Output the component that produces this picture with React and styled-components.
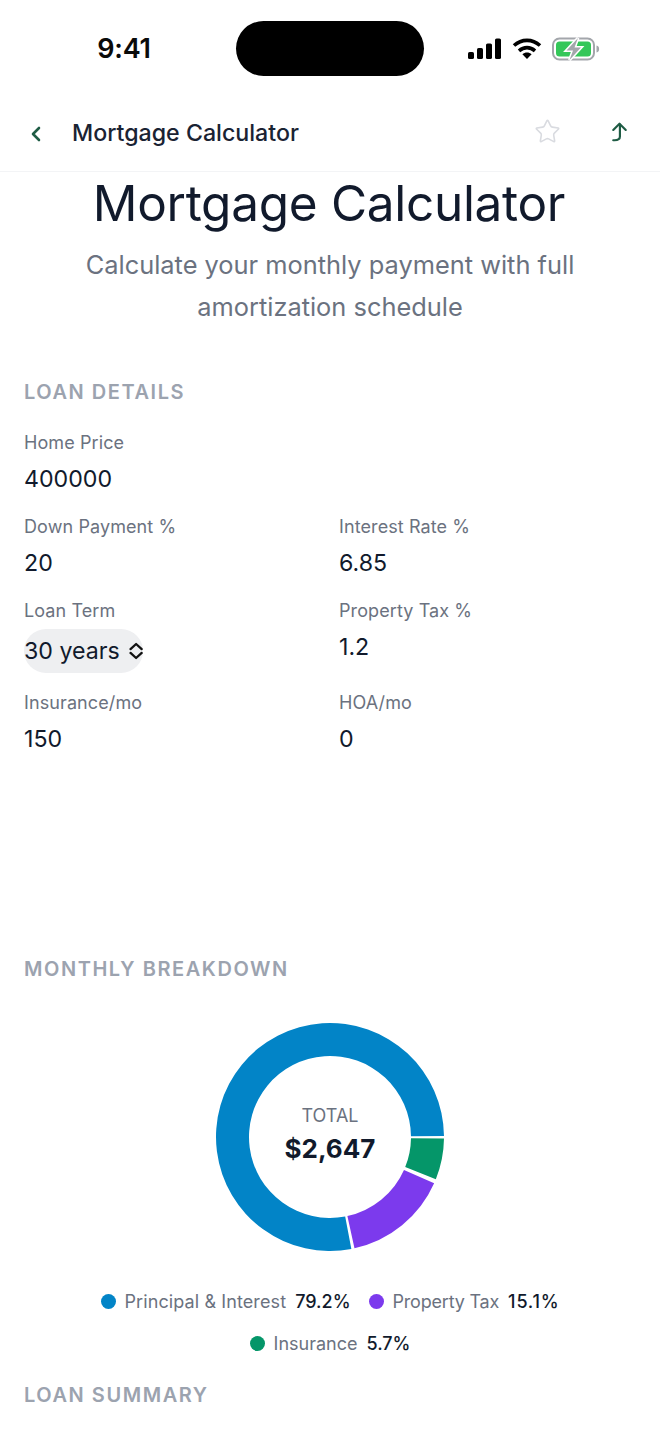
import React from "react";
import styled, { createGlobalStyle } from "styled-components";
import { ChevronLeft, Star } from "lucide-react";

const Global = createGlobalStyle`
  html, body { margin: 0; padding: 0; background: #fff; }
  body { font-family: Inter, "Liberation Sans", sans-serif; color: #111827; }
  * { box-sizing: border-box; }
`;
const Page = styled.div`width: 660px; height: 1434px; overflow: hidden; background: #fff;`;
const StatusBar = styled.div`
  height: 96px; display: grid; grid-template-columns: 236px 188px 236px; align-items: start; padding-top: 21px;
`;
const Clock = styled.div`
  font-size: 27px; font-weight: 600; letter-spacing: -0.2px; color: #0a0a0a; text-align: center; line-height: 55px; padding-left: 12px;
`;
const Island = styled.div`height: 55px; background: #000; border-radius: 28px;`;
const StatusIcons = styled.div`display: flex; align-items: center; height: 55px; padding-left: 44px;`;
const StatusIcon = styled.div`display: flex; align-items: center; margin-left: ${p => p.$gap}px;`;
const NavBar = styled.div`
  height: 76px; display: flex; align-items: center; padding: 0 32px 2px 24px; border-bottom: 1px solid #f3f4f6;
`;
const BackButton = styled.div`width: 48px; display: flex; align-items: center; color: #1f5c45; margin-top: 2px;`;
const NavTitle = styled.div`flex: 1; font-size: 23.2px; font-weight: 500; color: #1a2333; line-height: 30px;`;
const NavAction = styled.div`display: flex; align-items: center; justify-content: center; margin-left: ${p => p.$gap}px; margin-top: -2px;`;
const Main = styled.div`padding: 0 24px;`;
const Hero = styled.div`text-align: center; margin-top: -1px;`;
const Title = styled.h1`margin: 0; padding-right: 2px; font-size: 49.5px; font-weight: 400; line-height: 64px; color: #111a2c; letter-spacing: -0.3px;`;
const Subtitle = styled.p`margin: 0; padding: 9px 30px 0; font-size: 25.4px; line-height: 42px; color: #6b7280;`;
const SectionLabel = styled.div`
  font-size: 20px; font-weight: 600; letter-spacing: 1.55px; color: #9ca3af; text-transform: uppercase; line-height: 24px;
`;
const DetailsLabel = styled(SectionLabel)`margin-top: 52px;`;
const Fields = styled.div`display: grid; grid-template-columns: 315px 1fr; margin-top: 27px;`;
const Field = styled.div`height: ${p => p.$h || 84}px; grid-column: ${p => p.$wide ? "1 / -1" : "auto"};`;
const FieldLabel = styled.div`font-size: 18px; letter-spacing: 0.1px; line-height: 24px; color: #6b7280; height: 24px;`;
const FieldValue = styled.div`font-size: 23.2px; line-height: 30px; margin-top: 9px; color: #111a2c;`;
const Select = styled.div`
  display: inline-flex; align-items: center; gap: 9px; height: 44px; width: 119px; margin-top: 6px;
  background: #eeeff1; border-radius: 22px; font-size: 23.2px; color: #111a2c; white-space: nowrap;
`;
const BreakdownLabel = styled(SectionLabel)`margin-top: 182px;`;
const DonutWrap = styled.div`
  position: relative; width: 230px; height: 230px; margin: 41px auto 0;
`;
const DonutCenter = styled.div`
  position: absolute; inset: 0; display: flex; flex-direction: column; align-items: center; justify-content: center; padding-bottom: 3px;
`;
const TotalLabel = styled.div`font-size: 18px; line-height: 24px; color: #6b7280;`;
const TotalValue = styled.div`font-size: 26px; font-weight: 700; line-height: 36px; color: #111a2c; margin-top: 3px;`;
const Legend = styled.div`display: flex; flex-wrap: wrap; justify-content: center; column-gap: 18px; row-gap: 18px; margin-top: 37px;`;
const LegendItem = styled.div`display: flex; align-items: center; height: 24px; font-size: 18px;`;
const Dot = styled.span`width: 15px; height: 15px; border-radius: 50%; background: ${p => p.$c}; margin-right: 9px;`;
const LegendName = styled.span`color: #6b7280; margin-right: 9px; letter-spacing: ${p => p.$ls}px;`;
const LegendPct = styled.span`color: #111a2c; font-weight: 500; letter-spacing: ${p => p.$ls || 0}px;`;
const SummaryLabel = styled(SectionLabel)`margin-top: 28px;`;

const pol = (r, a) => {
  const t = (a * Math.PI) / 180;
  return [115 + r * Math.cos(t), 115 + r * Math.sin(t)];
};
const arc = (a0, a1, R = 114, r = 81) => {
  const [x1, y1] = pol(R, a0), [x2, y2] = pol(R, a1), [x3, y3] = pol(r, a1), [x4, y4] = pol(r, a0);
  const l = a1 - a0 > 180 ? 1 : 0;
  return `M${x1} ${y1}A${R} ${R} 0 ${l} 1 ${x2} ${y2}L${x3} ${y3}A${r} ${r} 0 ${l} 0 ${x4} ${y4}Z`;
};

const Signal = () => (
  <svg width="34" height="22" viewBox="0 0 34 22" fill="#000">
    <rect x="0" y="14" width="6" height="7" rx="1.6" /><rect x="9" y="10" width="6" height="11" rx="1.6" />
    <rect x="18" y="5.5" width="6" height="15.5" rx="1.6" /><rect x="27" y="0.5" width="6" height="20.5" rx="1.6" />
  </svg>
);
const Wifi = () => (
  <svg width="30" height="22" viewBox="0 0 30 22" fill="none" stroke="#000" strokeWidth="3.6">
    <path d="M2 7.5C9.5 .6 20.5 .6 28 7.5" /><path d="M7 12.8C11.8 8.6 18.2 8.6 23 12.8" />
    <path d="M15 21l-4.6-4.8c2.6-2.2 6.6-2.2 9.2 0z" fill="#000" stroke="none" />
  </svg>
);
const Battery = () => (
  <svg width="48" height="24" viewBox="0 0 48 24">
    <rect x="1" y="1.5" width="41" height="21" rx="6.5" fill="none" stroke="#a3a6ab" strokeWidth="2" />
    <rect x="4" y="4.5" width="35" height="15" rx="3.5" fill="#34c759" />
    <path d="M44.5 8.5c2 .4 2.6 1.8 2.6 3.5s-.6 3.1-2.6 3.5z" fill="#a3a6ab" />
    <path d="M26 1L14.5 13.5h6.5L17.5 23l11.5-12.5h-6.5z" fill="#a3a6ab" stroke="#fff" strokeWidth="3" paintOrder="stroke" />
  </svg>
);
const ShareUp = () => (
  <svg width="17" height="20" viewBox="0 0 20 24" fill="none" stroke="#1f5c45" strokeWidth="2.6" strokeLinecap="round" strokeLinejoin="round">
    <path d="M2.5 9.5L10 2l7.5 7.5" /><path d="M10.5 3v14.5c0 3-1.6 4.4-6.5 4.4H2.5" />
  </svg>
);
const UpDown = () => (
  <svg width="15" height="18" viewBox="0 0 15 18" fill="none" stroke="#111" strokeWidth="2.4" strokeLinecap="round" strokeLinejoin="round">
    <path d="M1.6 7L7.5 1.6 13.4 7" /><path d="M1.6 11L7.5 16.4 13.4 11" />
  </svg>
);

export default function App() {
  return (
    <Page>
      <Global />
      <StatusBar>
        <Clock>9:41</Clock>
        <Island />
        <StatusIcons>
          <Signal />
          <StatusIcon $gap={10}><Wifi /></StatusIcon>
          <StatusIcon $gap={10}><Battery /></StatusIcon>
        </StatusIcons>
      </StatusBar>
      <NavBar>
        <BackButton><ChevronLeft size={24} strokeWidth={2.6} /></BackButton>
        <NavTitle>Mortgage Calculator</NavTitle>
        <NavAction $gap={0}><Star size={27} strokeWidth={1.4} color="#d9dbe0" /></NavAction>
        <NavAction $gap={50}><ShareUp /></NavAction>
      </NavBar>
      <Main>
        <Hero>
          <Title>Mortgage Calculator</Title>
          <Subtitle>Calculate your monthly payment with full amortization schedule</Subtitle>
        </Hero>
        <DetailsLabel>Loan Details</DetailsLabel>
        <Fields>
          <Field $wide><FieldLabel>Home Price</FieldLabel><FieldValue>400000</FieldValue></Field>
          <Field><FieldLabel>Down Payment %</FieldLabel><FieldValue>20</FieldValue></Field>
          <Field><FieldLabel>Interest Rate %</FieldLabel><FieldValue>6.85</FieldValue></Field>
          <Field $h={92}>
            <FieldLabel>Loan Term</FieldLabel>
            <Select>30 years<UpDown /></Select>
          </Field>
          <Field $h={92}><FieldLabel>Property Tax %</FieldLabel><FieldValue>1.2</FieldValue></Field>
          <Field><FieldLabel>Insurance/mo</FieldLabel><FieldValue>150</FieldValue></Field>
          <Field><FieldLabel>HOA/mo</FieldLabel><FieldValue>0</FieldValue></Field>
        </Fields>
        <BreakdownLabel>Monthly Breakdown</BreakdownLabel>
        <DonutWrap>
          <svg width="230" height="230" viewBox="0 0 230 230">
            <path d={arc(0.8, 21.8)} fill="#059669" />
            <path d={arc(24, 77.6)} fill="#7c3aed" />
            <path d={arc(79.2, 359.5)} fill="#0284c7" />
          </svg>
          <DonutCenter>
            <TotalLabel>TOTAL</TotalLabel>
            <TotalValue>$2,647</TotalValue>
          </DonutCenter>
        </DonutWrap>
        <Legend>
          <LegendItem><Dot $c="#0284c7" /><LegendName $ls={0.1}>Principal &amp; Interest</LegendName><LegendPct>79.2%</LegendPct></LegendItem>
          <LegendItem><Dot $c="#7c3aed" /><LegendName $ls={-0.2}>Property Tax</LegendName><LegendPct $ls={0.8}>15.1%</LegendPct></LegendItem>
          <LegendItem><Dot $c="#059669" /><LegendName $ls={0}>Insurance</LegendName><LegendPct>5.7%</LegendPct></LegendItem>
        </Legend>
        <SummaryLabel>Loan Summary</SummaryLabel>
      </Main>
    </Page>
  );
}
